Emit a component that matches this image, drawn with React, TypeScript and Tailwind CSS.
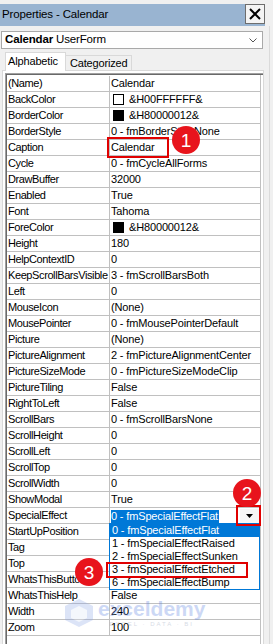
type Row = { name: string; value: string; swatch?: "white" | "black"; selected?: boolean };

// values under the open dropdown are hidden in the picture, so left blank
const rows: Row[] = [
  { name: "(Name)", value: "Calendar" },
  { name: "BackColor", value: "&H00FFFFFF&", swatch: "white" },
  { name: "BorderColor", value: "&H80000012&", swatch: "black" },
  { name: "BorderStyle", value: "0 - fmBorderStyleNone" },
  { name: "Caption", value: "Calendar" },
  { name: "Cycle", value: "0 - fmCycleAllForms" },
  { name: "DrawBuffer", value: "32000" },
  { name: "Enabled", value: "True" },
  { name: "Font", value: "Tahoma" },
  { name: "ForeColor", value: "&H80000012&", swatch: "black" },
  { name: "Height", value: "180" },
  { name: "HelpContextID", value: "0" },
  { name: "KeepScrollBarsVisible", value: "3 - fmScrollBarsBoth" },
  { name: "Left", value: "0" },
  { name: "MouseIcon", value: "(None)" },
  { name: "MousePointer", value: "0 - fmMousePointerDefault" },
  { name: "Picture", value: "(None)" },
  { name: "PictureAlignment", value: "2 - fmPictureAlignmentCenter" },
  { name: "PictureSizeMode", value: "0 - fmPictureSizeModeClip" },
  { name: "PictureTiling", value: "False" },
  { name: "RightToLeft", value: "False" },
  { name: "ScrollBars", value: "0 - fmScrollBarsNone" },
  { name: "ScrollHeight", value: "0" },
  { name: "ScrollLeft", value: "0" },
  { name: "ScrollTop", value: "0" },
  { name: "ScrollWidth", value: "0" },
  { name: "ShowModal", value: "True" },
  { name: "SpecialEffect", value: "0 - fmSpecialEffectFlat", selected: true },
  { name: "StartUpPosition", value: "" },
  { name: "Tag", value: "" },
  { name: "Top", value: "" },
  { name: "WhatsThisButton", value: "" },
  { name: "WhatsThisHelp", value: "False" },
  { name: "Width", value: "240" },
  { name: "Zoom", value: "100" },
];

const effects = [
  "0 - fmSpecialEffectFlat",
  "1 - fmSpecialEffectRaised",
  "2 - fmSpecialEffectSunken",
  "3 - fmSpecialEffectEtched",
  "6 - fmSpecialEffectBump",
];

function Badge({ n, className }: { n: string; className: string }) {
  return (
    <div
      className={`absolute flex h-[28px] w-[28px] items-center justify-center rounded-full bg-[#e8141c] text-[19px] leading-none text-white ${className}`}
    >
      {n}
    </div>
  );
}

export default function App() {
  return (
    <div className="relative flex h-[644px] w-[273px] flex-col overflow-hidden bg-[#f0f0f0] font-['Liberation_Sans',Arial,sans-serif] text-[11px] tracking-[-0.15px] text-black">
      {/* title bar */}
      <div className="mt-[4px] flex h-[22px] w-[265px] items-start justify-between bg-[#99b4d1]">
        <span className="pl-[2px] pt-[3px] text-[11.5px] leading-[15px]">Properties - Calendar</span>
        <div className="flex h-[20px] w-[20px] items-center justify-center border border-[#6d6d6d] bg-[#f4f4f4]">
          <svg width="12" height="12" viewBox="0 0 12 12">
            <path d="M1 1 L11 11 M11 1 L1 11" stroke="#000" strokeWidth="2" />
          </svg>
        </div>
      </div>

      {/* object combo */}
      <div className="ml-[1px] mt-[5px] flex h-[18px] w-[262px] items-center justify-between border border-[#a9a9a9] bg-white pl-[3px] pr-[5px]">
        <span className="text-[11.5px]">
          <b>Calendar</b> UserForm
        </span>
        <svg width="8" height="5" viewBox="0 0 8 5">
          <path d="M0.5 0.5 L4 4 L7.5 0.5" stroke="#555" fill="none" strokeWidth="1" />
        </svg>
      </div>

      {/* tabs */}
      <div className="relative z-10 ml-[5px] mt-[3px] flex h-[19px] items-end">
        <div className="h-[19px] border border-b-0 border-[#d9d9d9] bg-white pl-[2px] pr-[7px] leading-[17px]">Alphabetic</div>
        <div className="h-[16px] border border-l-0 border-[#d9d9d9] bg-[#f0f0f0] pl-[4px] pr-[3px] leading-[14px]">
          Categorized
        </div>
      </div>

      {/* grid panel */}
      <div className="-mt-px ml-[2px] flex w-[262px] flex-1 flex-col border border-b-0 border-[#d9d9d9] bg-white pl-[2px] pt-[2px]">
        <div className="flex flex-1 flex-col border-l border-t border-[#a0a0a0]">
          <div className="flex flex-1 flex-col border-l border-t border-[#696969] pr-[2px]">
            <div className="flex flex-1 flex-col border-r border-[#c0c0c0] pt-[1px]">
              {rows.map((r) => (
                <div key={r.name} className="flex h-[16px] border-b border-[#c0c0c0] leading-[15px]">
                  <div className="w-[103px] shrink-0 overflow-hidden whitespace-nowrap border-r border-[#c0c0c0] pl-[1px] tracking-[-0.4px]">
                    {r.name}
                  </div>
                  <div className="flex min-w-0 flex-1 items-center overflow-hidden whitespace-nowrap pl-[1px]">
                    {r.swatch && (
                      <span
                        className={`ml-[2px] mr-[5px] h-[11px] w-[11px] shrink-0 border border-black ${
                          r.swatch === "white" ? "bg-white" : "bg-black"
                        }`}
                      />
                    )}
                    {r.selected ? (
                      <>
                        <span className="mt-px bg-[#0078d7] pr-[1px] leading-[13px] text-white">{r.value}</span>
                        <span className="flex-1" />
                        <span className="mr-[1px] flex h-[14px] w-[19px] items-center justify-center bg-[#f6f6f6]">
                          <svg width="7" height="4" viewBox="0 0 7 4">
                            <path d="M0 0 H7 L3.5 4 Z" fill="#000" />
                          </svg>
                        </span>
                      </>
                    ) : (
                      r.value
                    )}
                  </div>
                </div>
              ))}
            </div>
          </div>
        </div>
      </div>

      {/* right window edge */}
      <div className="absolute right-[3px] top-[26px] h-[618px] w-px bg-[#dadada]" />

      {/* dropdown list */}
      <div className="absolute left-[109px] top-[523px] flex h-[67px] w-[151px] flex-col border border-[#0078d7] bg-white">
        {effects.map((e, i) => (
          <div
            key={e}
            className={`h-[13px] whitespace-nowrap pl-[2px] leading-[13px] ${i === 0 ? "bg-[#0078d7] text-white" : ""}`}
          >
            {e}
          </div>
        ))}
      </div>

      {/* watermark */}
      <div className="pointer-events-none absolute left-[63px] top-[598px] flex items-start gap-[3px] opacity-30">
        <svg width="32" height="30" viewBox="0 0 32 30">
          <path d="M16 1 L30 8 V22 L16 29 L2 22 V8 Z" fill="#8fa9e8" />
          <path d="M16 8 L24 12 V20 L16 24 L8 20 V12 Z" fill="#ffffff" opacity="0.7" />
        </svg>
        <div className="flex flex-col items-center">
          <span className="text-[21px] font-bold leading-[22px] tracking-[0px] text-[#5a7fe0]">exceldemy</span>
          <span className="text-[6px] leading-[8px] tracking-[2px] text-[#7a8aa8]">EXCEL · DATA · BI</span>
        </div>
      </div>

      {/* annotations */}
      <div className="absolute left-[107px] top-[137px] h-[21px] w-[62px] border-2 border-[#e00000]" />
      <Badge n="1" className="left-[172px] top-[126px]" />
      <div className="absolute left-[236px] top-[505px] h-[21px] w-[25px] border-2 border-[#e00000]" />
      <Badge n="2" className="left-[233px] top-[479px]" />
      <div className="absolute left-[106px] top-[562px] h-[16px] w-[142px] border-2 border-[#e00000]" />
      <Badge n="3" className="left-[75px] top-[558px]" />
    </div>
  );
}
